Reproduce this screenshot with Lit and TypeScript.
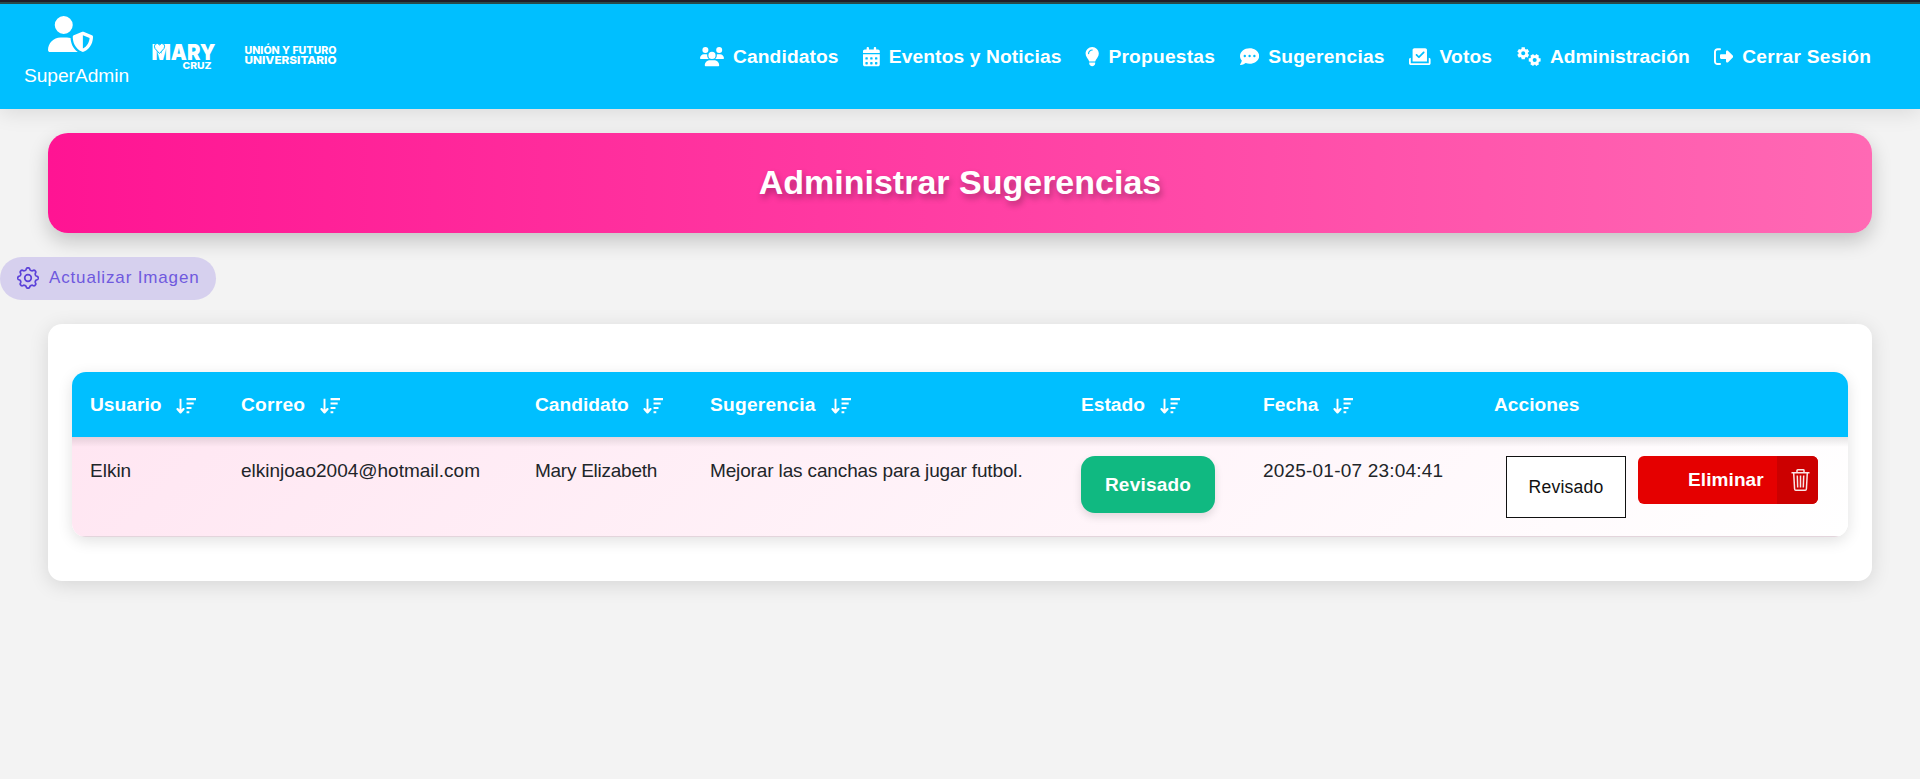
import { LitElement, html, css, svg } from "lit";
import { customElement } from "lit/decorators.js";

const sq = (x: number, y: number) =>
  `M${x} ${y}h32a16 16 0 0 1 16 16v32a16 16 0 0 1 -16 16h-32a16 16 0 0 1 -16 -16v-32a16 16 0 0 1 16 -16z`;

const dot = (x: number, y: number, r: number) =>
  `M${x - r} ${y}a${r} ${r} 0 1 0 ${2 * r} 0a${r} ${r} 0 1 0 ${-2 * r} 0z`;

const bar = (y: number, w: number) => `M304 ${y}h${w + 32}v60h${-w - 32}z`;

/* Six-toothed gear outline centred on (cx, cy), with a round hole. */
function gear(cx: number, cy: number, phase: number): string {
  const pts: string[] = [];
  for (let i = 0; i < 6; i++) {
    const mid = phase + (i * Math.PI) / 3;
    for (const [da, r] of [[-0.38, 126], [-0.27, 164], [0.27, 164], [0.38, 126]]) {
      pts.push(`${(cx + r * Math.cos(mid + da)).toFixed(1)} ${(cy + r * Math.sin(mid + da)).toFixed(1)}`);
    }
  }
  return `M${pts.join("L")}z${dot(cx, cy, 54)}`;
}

/* Soft eight-lobed cog outline on a 24px grid. */
function cog(): string {
  const pts: string[] = [];
  for (let i = 0; i < 160; i++) {
    const t = (i / 160) * 2 * Math.PI;
    const r = 9.1 + 1.15 * Math.tanh(1.6 * Math.cos(8 * t));
    pts.push(`${(12 + r * Math.cos(t)).toFixed(2)} ${(12 + r * Math.sin(t)).toFixed(2)}`);
  }
  return `M${pts.join("L")}z`;
}

const ICONS: Record<string, { w: number; d: string }> = {
  users: { w: 640, d: "M144 0a80 80 0 1 1 0 160A80 80 0 1 1 144 0zM512 0a80 80 0 1 1 0 160A80 80 0 1 1 512 0zM0 298.7C0 239.8 47.8 192 106.7 192l42.7 0c15.9 0 31 3.5 44.6 9.7c-1.3 7.2-1.9 14.7-1.9 22.3c0 38.2 16.8 72.5 43.3 96c-.2 0-.4 0-.7 0L21.3 320C9.6 320 0 310.4 0 298.7zM405.3 320c-.2 0-.4 0-.7 0c26.6-23.5 43.3-57.8 43.3-96c0-7.6-.7-15-1.9-22.3c13.6-6.3 28.7-9.7 44.6-9.7l42.7 0C592.2 192 640 239.8 640 298.7c0 11.8-9.6 21.3-21.3 21.3l-213.3 0zM224 224a96 96 0 1 1 192 0 96 96 0 1 1 -192 0zM128 485.3C128 411.7 187.7 352 261.3 352l117.3 0C452.3 352 512 411.7 512 485.3c0 14.7-11.9 26.7-26.7 26.7l-330.7 0c-14.7 0-26.7-11.9-26.7-26.7z" },
  calendar: { w: 448, d: "M128 0c17.7 0 32 14.3 32 32l0 32 128 0 0-32c0-17.7 14.3-32 32-32s32 14.3 32 32l0 32 48 0c26.5 0 48 21.5 48 48l0 48L0 160l0-48C0 85.5 21.5 64 48 64l48 0 0-32c0-17.7 14.3-32 32-32zM0 192l448 0 0 272c0 26.5-21.5 48-48 48L48 512c-26.5 0-48-21.5-48-48L0 192z" + [80, 208, 336].map((x) => sq(x, 272) + sq(x, 400)).join("") },
  bulb: { w: 384, d: "M272 384c9.6-31.9 29.5-59.1 49.2-86.2c5.2-7.1 10.4-14.2 15.4-21.4c19.8-28.5 31.4-63 31.4-100.3C368 78.8 289.2 0 192 0S16 78.8 16 176c0 37.3 11.6 71.9 31.4 100.3c5 7.2 10.2 14.3 15.4 21.4c19.8 27.1 39.7 54.4 49.2 86.2l160 0zM192 512c44.2 0 80-35.8 80-80l0-16-160 0 0 16c0 44.2 35.8 80 80 80zM112 176c0 8.8-7.2 16-16 16s-16-7.2-16-16c0-61.9 50.1-112 112-112c8.8 0 16 7.2 16 16s-7.2 16-16 16c-44.2 0-80 35.8-80 80z" },
  comment: { w: 512, d: "M256 448c141.4 0 256-93.1 256-208S397.4 32 256 32S0 125.1 0 240c0 45.1 17.7 86.8 47.7 120.9c-1.9 24.5-11.4 46.3-21.4 62.9c-5.5 9.2-11.1 16.6-15.2 21.6c-2.1 2.5-3.7 4.4-4.9 5.7l-1.6 1.7c-4.6 4.6-5.9 11.4-3.4 17.4c2.5 6 8.3 9.9 14.8 9.9c28.7 0 57.6-8.9 81.6-19.3c22.9-10 42.4-21.9 54.3-30.6c31.8 11.5 67 17.9 104.1 17.9z" + dot(128, 240, 32) + dot(256, 240, 32) + dot(384, 240, 32) },
  vote: { w: 576, d: "M96 80c0-26.5 21.5-48 48-48l288 0c26.5 0 48 21.5 48 48l0 304L96 384 96 80zm313 47c-9.4-9.4-24.6-9.4-33.9 0l-111 111-47-47c-9.4-9.4-24.6-9.4-33.9 0s-9.4 24.6 0 33.9l64 64c9.4 9.4 24.6 9.4 33.9 0L409 161c9.4-9.4 9.4-24.6 0-33.9zM0 336c0-26.5 21.5-48 48-48l0 144l480 0 0-144c26.500 0 48 21.500 48 48l0 96c0 26.500-21.500 48-48 48L48 480c-26.500 0-48-21.500-48-48l0-96z" },
  gears: { w: 640, d: gear(166, 168, Math.PI / 6) + gear(472, 346, 0) },
  logout: { w: 512, d: "M377.9 105.9L500.7 228.7c7.2 7.2 11.3 17.1 11.3 27.3s-4.1 20.1-11.3 27.3L377.9 406.1c-6.4 6.4-15 9.9-24 9.9c-18.7 0-33.9-15.2-33.9-33.9l0-62.1-128 0c-17.7 0-32-14.3-32-32l0-64c0-17.7 14.3-32 32-32l128 0 0-62.1c0-18.7 15.2-33.9 33.9-33.9c9 0 17.6 3.6 24 9.9zM160 84L96 84c-24 0-44 20-44 44l0 256c0 24 20 44 44 44l64 0c14 0 26 12 26 26s-12 26-26 26l-64 0c-53 0-96-43-96-96L0 128C0 75 43 32 96 32l64 0c14 0 26 12 26 26s-12 26-26 26z" },
  shield: { w: 640, d: "M224 256A128 128 0 1 0 224 0a128 128 0 1 0 0 256zm-45.7 48C79.8 304 0 383.8 0 482.3C0 498.7 13.3 512 29.7 512l388.6 0c1.8 0 3.5-.2 5.3-.5c-76.3-55.1-99.8-141-103.1-200.2c-16.1-4.8-33.1-7.3-50.7-7.3l-91.4 0zm308.8-78.3l-120 48C358 277.4 352 286.2 352 296c0 63.3 25.9 168.8 134.8 214.2c5.9 2.5 12.6 2.5 18.5 0C614.1 464.8 640 359.3 640 296c0-9.8-6-18.6-15.1-22.3l-120-48c-5.7-2.3-12.1-2.3-17.8 0zM591.4 312c-3.9 50.7-27.2 116.7-95.4 149.7l0-187.8L591.4 312z" },
  sort: { w: 576, d: "M151.6 469.6C145.5 476.2 137 480 128 480s-17.5-3.8-23.6-10.4l-88-96c-11.9-13-11.1-33.3 2-45.2s33.3-11.1 45.2 2L100 365.7 100 48h56l0 317.700 36.400-35.4c11.9-13 32.2-13.9 45.2-2s13.9 32.2 2 45.2l-88 96z" + bar(416, 48) + bar(288, 112) + bar(160, 176) + bar(32, 244) },
};

const icon = (name: string, cls: string) => html`
  <svg class=${cls} viewBox="0 0 ${ICONS[name].w} 512">
    ${svg`<path fill="currentColor" fill-rule="evenodd" d=${ICONS[name].d}></path>`}
  </svg>`;

const NAV = [
  ["users", "Candidatos"],
  ["calendar", "Eventos y Noticias"],
  ["bulb", "Propuestas"],
  ["comment", "Sugerencias"],
  ["vote", "Votos"],
  ["gears", "Administración"],
  ["logout", "Cerrar Sesión"],
];

const COLUMNS = ["Usuario", "Correo", "Candidato", "Sugerencia", "Estado", "Fecha"];

@customElement("app-root")
export class AppRoot extends LitElement {
  static styles = css`
    :host {
      display: block;
      min-height: 779px;
      background: #f3f3f3;
      color: #212529;
      font-family: "Liberation Sans", Arial, sans-serif;
      font-size: 19px;
      line-height: 24px;
    }
    * { box-sizing: border-box; }
    svg { display: block; flex: none; }
    .strip { height: 4px; background: linear-gradient(#231f2b 50%, #2b4d4f 50%); }
    header {
      display: flex;
      height: 105px;
      background: #00bfff;
      color: #fff;
      box-shadow: 0 4px 20px rgba(0, 0, 0, 0.1);
    }
    .user { width: 151px; padding: 12px 0 0 24px; font-size: 19.2px; }
    .user svg { margin-left: 24px; height: 36px; width: 45px; }
    .user span { display: block; margin-top: 12px; letter-spacing: -0.05px; }
    .brand { padding-top: 36px; width: 190px; }
    nav {
      display: grid;
      grid-template-columns: 163px 222px 155px 169px 108px 197px 158px;
      margin-left: auto;
      padding: 41px 48px 0 0;
      height: 65px;
      font-weight: 700;
      font-size: 19.2px;
      letter-spacing: 0.12px;
      white-space: nowrap;
    }
    nav a { display: flex; gap: 9px; align-items: center; }
    nav a:nth-child(3), nav a:nth-child(4) { letter-spacing: 0.22px; }
    nav a:nth-child(6) { letter-spacing: 0; }
    nav a:nth-child(7) { letter-spacing: 0.24px; }
    .nav-icon { height: 19.2px; }
    .banner {
      display: flex;
      align-items: center;
      justify-content: center;
      height: 100px;
      margin: 24px 48px;
      border-radius: 20px;
      background: linear-gradient(90deg, #ff1493, #ff69b4);
      box-shadow: 0 8px 20px rgba(0, 0, 0, 0.2);
      color: #fff;
      text-shadow: 2px 4px 6px rgba(0, 0, 0, 0.3);
    }
    h1 { margin: 0; padding-bottom: 3px; font-size: 34px; line-height: 40px; }
    .update {
      display: flex;
      align-items: center;
      gap: 9px;
      width: 216px;
      height: 43px;
      padding: 0 0 1px 16px;
      border: 0;
      border-radius: 22px;
      background: #d6d0ee;
      color: #5b41d9;
      font: 17px "Liberation Sans", Arial, sans-serif;
      letter-spacing: 0.85px;
      white-space: nowrap;
    }
    .update span { color: #6f59de; }
    .card {
      height: 257px;
      margin: 24px 48px 0;
      padding: 48px 24px;
      border-radius: 14px;
      background: #fff;
      box-shadow: 0 4px 20px rgba(0, 0, 0, 0.12);
    }
    .table { border-radius: 14px; overflow: hidden; background: #fff; }
    .shadow { border-radius: 14px; box-shadow: 0 4px 15px rgba(0, 0, 0, 0.12); }
    .row {
      display: grid;
      grid-template-columns: 151px 294px 175px 371px 182px 231px 1fr;
    }
    .row > div { padding-left: 18px; white-space: nowrap; }
    .head {
      height: 65px;
      background: #00bfff;
      color: #fff;
      font-weight: 700;
      font-size: 19.2px;
      align-items: center;
    }
    .head > div { display: flex; align-items: center; gap: 15px; }
    .head > div:nth-child(2), .head > div:nth-child(4) { letter-spacing: 0.22px; }
    .head > div:nth-child(3) { gap: 14px; }
    .sort { width: 20px; height: 17.6px; margin-top: 2px; }
    .body {
      height: 100px;
      padding-top: 19px;
      background: linear-gradient(to bottom, rgba(0, 0, 0, 0.1), transparent 10px), linear-gradient(135deg, #ffe6f2, #fff);
      border-bottom: 1px solid #e3d5dc;
    }
    .body > .txt { padding-top: 3px; }
    .name { letter-spacing: -0.26px; }
    .msg { letter-spacing: -0.14px; }
    .date { letter-spacing: 0.2px; }
    .badge {
      width: 134px;
      height: 57px;
      border-radius: 14px;
      background: #10b981;
      color: #fff;
      font-weight: 700;
      line-height: 57px;
      text-align: center;
      letter-spacing: 0.2px;
      box-shadow: 0 4px 8px rgba(0, 0, 0, 0.12);
    }
    .row > .actions { display: flex; gap: 12px; padding-left: 30px; align-items: flex-start; }
    .state {
      width: 120px;
      height: 62px;
      padding: 0;
      border: 1px solid #111;
      background: #fff;
      color: #111;
      font: 17.6px "Liberation Sans", Arial, sans-serif;
      letter-spacing: 0.2px;
    }
    .delete {
      display: flex;
      align-items: center;
      width: 180px;
      height: 48px;
      padding: 0;
      border: 0;
      border-radius: 6px;
      overflow: hidden;
      background: #e50000;
      color: #fff;
      font: 700 19px "Liberation Sans", Arial, sans-serif;
    }
    .delete span { width: 139px; padding: 0 0 1px 50px; text-align: left; letter-spacing: 0.1px; }
    .trash { display: flex; width: 41px; height: 48px; padding: 13px 0 0 14px; background: #cc0000; }
  `;

  render() {
    return html`
      <div class="strip"></div>
      <header>
        <div class="user">${icon("shield", "")}<span>SuperAdmin</span></div>
        <div class="brand">
          <svg width="190" height="36" viewBox="0 0 190 36" fill="#fff" font-family="Inter, sans-serif" font-weight="900">
            <text x="0.5" y="20" font-size="22" textLength="64" lengthAdjust="spacingAndGlyphs">MARY</text>
            <path stroke="#00bfff" stroke-width="1" d="M8.500 13.500L4 8.500Q2.600 6 4.400 4Q6.800 2.400 8.500 5Q10.400 2.400 12.800 4Q14.400 6 13 8.500z"></path>
            <text x="31.5" y="28.5" font-size="9.5" font-weight="800" textLength="29" lengthAdjust="spacingAndGlyphs">CRUZ</text>
            <text x="93.5" y="14" font-size="10" font-weight="800" textLength="92" lengthAdjust="spacingAndGlyphs">UNIÓN Y FUTURO</text>
            <text x="93.5" y="24" font-size="11" font-weight="800" textLength="92" lengthAdjust="spacingAndGlyphs">UNIVERSITARIO</text>
          </svg>
        </div>
        <nav>${NAV.map(([i, label]) => html`<a>${icon(i, "nav-icon")}<span>${label}</span></a>`)}</nav>
      </header>
      <div class="banner"><h1>Administrar Sugerencias</h1></div>
      <button class="update">
        <svg width="24" height="24" viewBox="0 0 24 24" fill="none" stroke="currentColor" stroke-width="1.7" stroke-linejoin="round">
          <path d=${cog()}></path>
          <circle cx="12" cy="12" r="3.3"></circle>
        </svg>
        <span>Actualizar Imagen</span>
      </button>
      <div class="card">
        <div class="shadow">
          <div class="table">
            <div class="row head">
              ${COLUMNS.map((c) => html`<div><span>${c}</span>${icon("sort", "sort")}</div>`)}
              <div>Acciones</div>
            </div>
            <div class="row body">
              <div class="txt">Elkin</div>
              <div class="txt mail">elkinjoao2004@hotmail.com</div>
              <div class="txt name">Mary Elizabeth</div>
              <div class="txt msg">Mejorar las canchas para jugar futbol.</div>
              <div><div class="badge">Revisado</div></div>
              <div class="txt date">2025-01-07 23:04:41</div>
              <div class="actions">
                <button class="state">Revisado</button>
                <button class="delete">
                  <span>Eliminar</span>
                  <i class="trash">
                    <svg width="19" height="22" viewBox="0 0 19 22" fill="none" stroke="#fff" stroke-width="1.5" stroke-opacity=".9">
                      <path d="M.5 3.700h18M6 3.500V1.500q0-.7.700-.7h5.600q.7 0 .7.700v2M2.700 4l.9 16q.1 1.200 1.200 1.200h9.400q1.100 0 1.200-1.200l.9-16M6.300 6.500l.4 12M9.500 6.500v12M12.700 6.500l-.4 12"></path>
                    </svg>
                  </i>
                </button>
              </div>
            </div>
          </div>
        </div>
      </div>
    `;
  }
}
